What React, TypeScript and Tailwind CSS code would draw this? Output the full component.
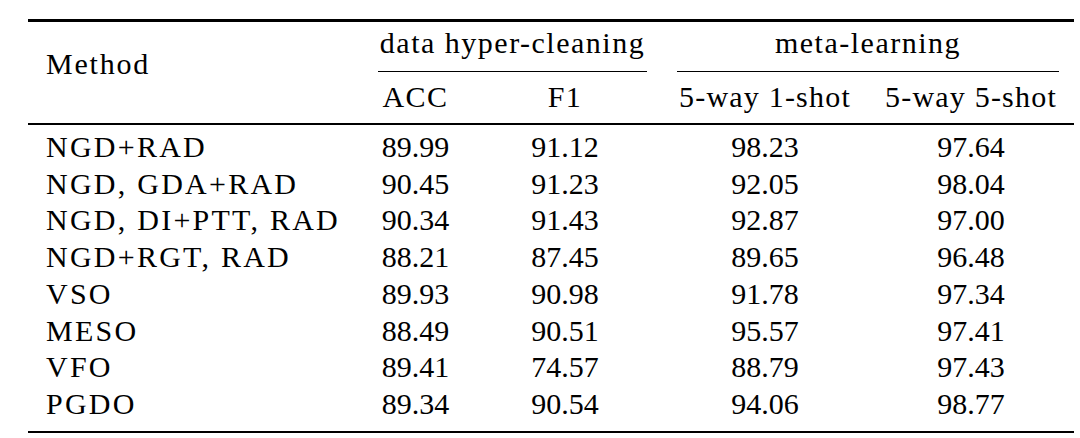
const rows: string[][] = [
  ["NGD+RAD", "89.99", "91.12", "98.23", "97.64"],
  ["NGD, GDA+RAD", "90.45", "91.23", "92.05", "98.04"],
  ["NGD, DI+PTT, RAD", "90.34", "91.43", "92.87", "97.00"],
  ["NGD+RGT, RAD", "88.21", "87.45", "89.65", "96.48"],
  ["VSO", "89.93", "90.98", "91.78", "97.34"],
  ["MESO", "88.49", "90.51", "95.57", "97.41"],
  ["VFO", "89.41", "74.57", "88.79", "97.43"],
  ["PGDO", "89.34", "90.54", "94.06", "98.77"],
];

export default function App() {
  return (
    <div className="w-[1080px] h-[438px] overflow-hidden bg-white text-black">
      <div className="pl-[28px] pt-[19px] font-['Liberation_Serif',serif] text-[30px]">
        <div className="w-[1046px]">
          <div className="h-[2.5px] bg-black" />
          <div className="flex h-[101.5px]">
            <div className="w-[335px] pl-[18px] pt-[24.7px] leading-[36px] tracking-[0.06em]">Method</div>
            <div className="w-[299px] flex flex-col pt-[3.4px]">
              <div className="leading-[36px] text-center tracking-[0.05em]">data hyper-cleaning</div>
              <div className="mx-[15px] mt-[10.6px] h-[1px] bg-black" />
              <div className="flex mt-[6.1px] leading-[36px] tracking-[0.05em]">
                <div className="w-[105px] text-center">ACC</div>
                <div className="w-[194px] text-center">F1</div>
              </div>
            </div>
            <div className="w-[412px] flex flex-col pt-[3.4px]">
              <div className="leading-[36px] text-center tracking-[0.05em]">meta-learning</div>
              <div className="mx-[15px] mt-[10.6px] h-[1px] bg-black" />
              <div className="flex mt-[6.1px] leading-[36px] tracking-[0.04em]">
                <div className="w-[206px] text-center">5-way 1-shot</div>
                <div className="w-[206px] text-center">5-way 5-shot</div>
              </div>
            </div>
          </div>
          <div className="h-[1.5px] bg-black" />
          <div className="pt-[4.5px] flex flex-col">
            {rows.map((r) => (
              <div key={r[0]} className="flex leading-[36.7px]">
                <div className="w-[335px] pl-[18px] tracking-[0.075em] whitespace-nowrap">{r[0]}</div>
                <div className="w-[105px] text-center">{r[1]}</div>
                <div className="w-[194px] text-center">{r[2]}</div>
                <div className="w-[206px] text-center">{r[3]}</div>
                <div className="w-[206px] text-center">{r[4]}</div>
              </div>
            ))}
          </div>
          <div className="mt-[8px] h-[2.5px] bg-black" />
        </div>
      </div>
    </div>
  );
}
